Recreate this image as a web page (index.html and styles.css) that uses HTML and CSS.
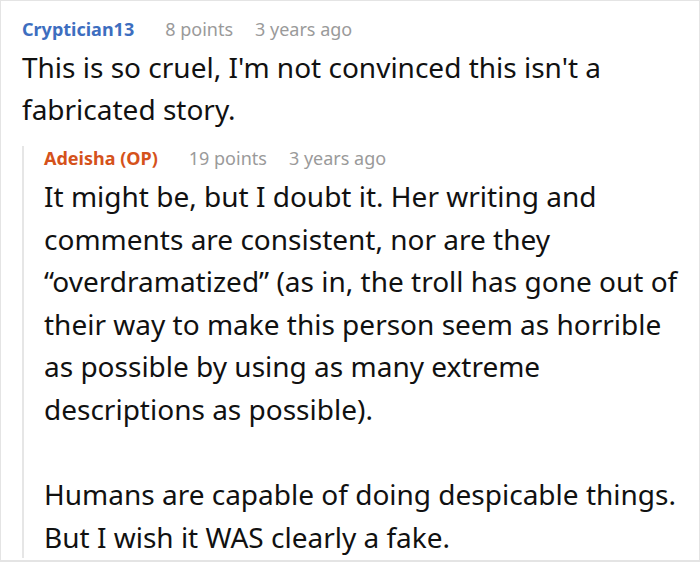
FILE: index.html
```html
<!DOCTYPE html>
<html>
<head>
<meta charset="utf-8">
<link rel="stylesheet" href="styles.css">
</head>
<body>
<div class="frame">
  <div class="comment">
    <div class="meta"><span class="name blue">Cryptician13</span><span class="points">8 points</span><span class="time">3 years ago</span></div>
    <p class="text">This is so cruel, I'm not convinced this isn't a fabricated story.</p>
    <div class="reply">
      <div class="meta"><span class="name orange">Adeisha (OP)</span><span class="points">19 points</span><span class="time">3 years ago</span></div>
      <p class="text">It might be, but I doubt it. Her writing and comments are consistent, nor are they “overdramatized” (as in, the troll has gone out of their way to make this person seem as horrible as possible by using as many extreme descriptions as possible).</p>
      <p class="text gap">Humans are capable of doing despicable things. But I wish it WAS clearly a fake.</p>
    </div>
  </div>
</div>
</body>
</html>
```
FILE: styles.css
```css
html, body { margin: 0; padding: 0; background: #fff; }
.frame {
  width: 700px;
  height: 562px;
  box-sizing: border-box;
  border: 1px solid #e4e4e4;
  border-bottom-width: 2px;
  padding: 16px 9px 0 21px;
  font-family: "Noto Sans", "Open Sans", sans-serif;
  color: #111;
  overflow: hidden;
}
.meta { font-size: 18px; line-height: 24px; white-space: nowrap; }
.name { font-weight: 700; margin-right: 31px; }
.blue { color: #3d6ebf; }
.orange { color: #d5521b; }
.points { color: #9a9a9a; margin-right: 22px; }
.time { color: #9a9a9a; }
.text { margin: 5px 0 0; font-size: 28px; line-height: 42px; }
.reply {
  margin-top: 16px;
  border-left: 2px solid #e6e6e6;
  padding-left: 20px;
}
.reply .text { line-height: 42.6px; }
.reply .gap { margin-top: 42.6px; margin-bottom: -14px; }
```
